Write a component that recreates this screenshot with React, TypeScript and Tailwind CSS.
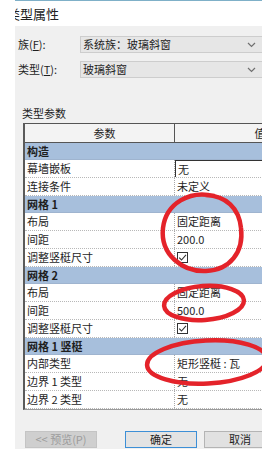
import React from "react";

type Row =
  | { g: string }
  | { n: string; v?: string; check?: boolean; box?: boolean };

const rows: Row[] = [
  { g: "构造" },
  { n: "幕墙嵌板", v: "无", box: true },
  { n: "连接条件", v: "未定义" },
  { g: "网格 1" },
  { n: "布局", v: "固定距离" },
  { n: "间距", v: "200.0" },
  { n: "调整竖梃尺寸", check: true },
  { g: "网格 2" },
  { n: "布局", v: "固定距离" },
  { n: "间距", v: "500.0" },
  { n: "调整竖梃尺寸", check: true },
  { g: "网格 1 竖梃" },
  { n: "内部类型", v: "矩形竖梃 : 瓦" },
  { n: "边界 1 类型", v: "无" },
  { n: "边界 2 类型", v: "无" },
];

function Chevron() {
  return (
    <svg width="9" height="6" viewBox="0 0 9 6" className="shrink-0">
      <path d="M1 1 L4.5 4.5 L8 1" fill="none" stroke="#707070" strokeWidth="1.2" />
    </svg>
  );
}

function Check() {
  return (
    <div className="w-[11px] h-[11px] border border-[#333] bg-white flex items-center justify-center">
      <svg width="9" height="9" viewBox="0 0 9 9">
        <path d="M1.2 4.6 L3.5 7 L8 1.8" fill="none" stroke="#333" strokeWidth="1.1" />
      </svg>
    </div>
  );
}

function Select({ text }: { text: string }) {
  return (
    <div className="w-[185px] h-[17px] bg-[#e6e6e6] border border-[#cdcdcd] flex items-center justify-between pl-[2px] pr-[8px]">
      <span className="text-[11px] leading-none text-[#1e1e1e]">{text}</span>
      <Chevron />
    </div>
  );
}

export default function App() {
  return (
    <div className="relative w-[262px] h-[455px] overflow-hidden bg-white font-['Noto_Sans_CJK_SC','Noto_Sans',sans-serif] text-[#1e1e1e]">
      <div className="ml-[15px] w-[400px] flex flex-col">
        <div className="h-px bg-[#7fb0c8]" />
        <div className="h-[25px] bg-white flex items-center overflow-hidden">
          <span className="-ml-[8px] text-[13px] leading-none text-[#222]">类型属性</span>
        </div>
        <div className="h-[423px] bg-[#f0f0f0] flex flex-col">
          <div className="mt-[10px] flex items-center">
            <span className="w-[65px] pl-[3px] text-[11px] leading-none">
              族(<span className="underline">F</span>):
            </span>
            <Select text="系统族：玻璃斜窗" />
          </div>
          <div className="mt-[8px] flex items-center">
            <span className="w-[65px] pl-[3px] text-[11px] leading-none">
              类型(<span className="underline">T</span>):
            </span>
            <Select text="玻璃斜窗" />
          </div>
          <div className="mt-[27px] h-[16px] pl-[7px] flex items-center text-[11px] leading-none">
            类型参数
          </div>
          <div className="mt-[2px] ml-[8px] w-[330px] bg-white border-l-2 border-[#5a5a5a] border-b border-b-[#9a9a9a]">
            <div className="h-[20px] flex border-t border-b border-[#555] bg-[#f3f3f3] text-[11px]">
              <div className="w-[150px] border-r border-[#555] flex items-center justify-center pl-[10px]">参数</div>
              <div className="w-[170px] flex items-center justify-center">值</div>
            </div>
            {rows.map((r, i) =>
              "g" in r ? (
                <div
                  key={i}
                  className="h-[17px] bg-[#a7bfdc] flex items-center pl-[2px] text-[11px] font-bold leading-none border-b border-[#9fb4cf]"
                >
                  {r.g}
                </div>
              ) : (
                <div key={i} className="h-[18px] flex border-b border-dotted border-[#b8b8b8] text-[11px] leading-none">
                  <div className="w-[150px] border-r border-dotted border-[#a8a8a8] flex items-center pl-[2px]">
                    {r.n}
                  </div>
                  <div
                    className={
                      r.box
                        ? "w-[170px] flex items-center pl-[2px] border-t border-l border-[#333]"
                        : "w-[170px] flex items-center pl-[2px]"
                    }
                  >
                    {r.check ? <Check /> : r.v}
                  </div>
                </div>
              )
            )}
          </div>
          <div className="mt-[21px] ml-[10px] flex items-center text-[11px] leading-none">
            <div className="w-[72px] h-[17px] bg-[#cfcfcf] border border-[#c4c4c4] text-[#9c9c9c] flex items-center justify-center">
              &lt;&lt; 预览(P)
            </div>
            <div className="ml-[28px] w-[72px] h-[17px] bg-[#e3e3e3] border border-[#3d8fd6] flex items-center justify-center">
              确定
            </div>
            <div className="ml-[7px] w-[72px] h-[17px] bg-[#e1e1e1] border border-[#b4b4b4] flex items-center justify-center">
              取消
            </div>
          </div>
        </div>
      </div>
      <svg className="absolute inset-0 pointer-events-none" width="262" height="455" viewBox="0 0 262 455">
        <g fill="none" stroke="#e4232a" strokeWidth="4.5" strokeLinecap="round">
          <path d="M214 196 C190 190 166 203 163 228 C160 255 183 272 206 271 C230 270 244 252 241 228 C239 208 226 196 206 195" />
          <ellipse cx="204" cy="303" rx="40" ry="17" transform="rotate(-4 204 303)" />
          <ellipse cx="207" cy="362" rx="60" ry="21.5" transform="rotate(-3 207 362)" />
        </g>
      </svg>
    </div>
  );
}
